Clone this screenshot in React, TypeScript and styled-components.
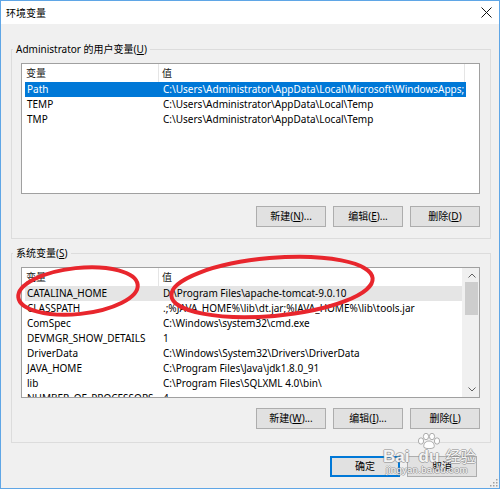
import React from "react";
import styled, { createGlobalStyle } from "styled-components";

const FONT = `"Noto Sans", "Noto Sans CJK SC", sans-serif`;

const Global = createGlobalStyle`
  html, body { margin: 0; padding: 0; background: #ffffff; }
  body { width: 500px; height: 489px; overflow: hidden; font-family: ${FONT}; font-size: 10px; color: #000; }
  * { box-sizing: border-box; }
`;

const Window = styled.div`
  position: relative;
  width: 500px;
  height: 489px;
  border: 1px solid #5fa6e6;
  background: #f0f0f0;
  display: flex;
  flex-direction: column;
`;

const TitleBar = styled.div`
  height: 23px;
  flex: none;
  background: #ffffff;
  display: flex;
  align-items: center;
  justify-content: space-between;
  padding: 0 7px 0 5px;
  font-size: 10px;
  line-height: 14px;
`;

const Body = styled.div`
  flex: 1;
  display: flex;
  flex-direction: column;
  padding: 17px 8px 0 10px;
`;

const Group = styled.fieldset<{ $pb: number; $mt: number }>`
  margin: ${(p) => p.$mt}px 0 0 0;
  padding: 6px 10px ${(p) => p.$pb}px 9px;
  border: 1px solid #dcdcdc;
  min-width: 0;
`;

const Legend = styled.legend`
  margin-left: -8px;
  padding: 0 3px;
  font-size: 10px;
  line-height: 16px;
  height: 16px;
`;

const List = styled.div`
  height: 131px;
  border: 1px solid #a0a0a0;
  background: #ffffff;
  display: flex;
  overflow: hidden;
`;

const ListContent = styled.div`
  flex: 1;
  min-width: 0;
  overflow: hidden;
`;

const Header = styled.div`
  height: 18px;
  display: flex;
  align-items: center;
  line-height: 18px;
  color: #1a1a1a;
`;

const HeaderCell = styled.div<{ $w?: number; $pl: number }>`
  flex: none;
  width: ${(p) => (p.$w ? `${p.$w}px` : "auto")};
  height: 18px;
  padding-left: ${(p) => p.$pl}px;
  border-right: 1px solid #e5e5e5;
  white-space: nowrap;
`;

const Row = styled.div<{ $state?: "selected" | "hover" }>`
  width: 441px;
  height: 15px;
  margin-left: 3px;
  display: flex;
  line-height: 15px;
  white-space: nowrap;
  background: ${(p) =>
    p.$state === "selected" ? "#0078d7" : p.$state === "hover" ? "#e5e5e5" : "transparent"};
  color: ${(p) => (p.$state === "selected" ? "#ffffff" : "#000000")};
`;

const NameCell = styled.div`
  flex: none;
  width: 136px;
  padding-left: 2px;
  overflow: hidden;
`;

const ValueCell = styled.div`
  flex: 1;
  padding-left: 2px;
  overflow: hidden;
`;

const ScrollBar = styled.div`
  flex: none;
  width: 17px;
  background: #f0f0f0;
  display: flex;
  flex-direction: column;
`;

const ArrowBox = styled.div<{ $h: number }>`
  height: ${(p) => p.$h}px;
  flex: none;
  display: flex;
  align-items: center;
  justify-content: center;
  padding-left: 2px;
`;

const Track = styled.div`
  flex: 1;
`;

const Thumb = styled.div`
  height: 33px;
  margin: 0 1px 0 3px;
  background: #cdcdcd;
`;

const ButtonRow = styled.div<{ $mt: number; $pr?: number }>`
  margin-top: ${(p) => p.$mt}px;
  padding-right: ${(p) => p.$pr ?? 0}px;
  display: flex;
  justify-content: flex-end;
  gap: 7px;
`;

const Button = styled.button<{ $default?: boolean }>`
  width: 70px;
  height: 21px;
  padding: 0;
  margin: 0;
  font-family: ${FONT};
  font-size: 10px;
  line-height: 19px;
  color: #000;
  background: #e1e1e1;
  border: 1px solid ${(p) => (p.$default ? "#0078d7" : "#adadad")};
  box-shadow: ${(p) => (p.$default ? "inset 0 0 0 1px #0078d7" : "none")};
`;

const Overlay = styled.svg`
  position: absolute;
  left: -1px;
  top: -1px;
  pointer-events: none;
`;

const Watermark = styled.div`
  position: absolute;
  left: 382px;
  top: 432px;
  display: flex;
  flex-direction: column;
  align-items: flex-start;
  color: rgba(255, 255, 255, 0.92);
  text-shadow: 1px 0 rgba(130, 130, 130, 0.55), -1px 0 rgba(130, 130, 130, 0.55),
    0 1px rgba(130, 130, 130, 0.55), 0 -1px rgba(130, 130, 130, 0.55);
  font-family: "Liberation Sans", "Noto Sans CJK SC", sans-serif;
  pointer-events: none;
`;

const WmTop = styled.div`
  display: flex;
  align-items: flex-end;
  height: 31px;
  font-size: 17px;
  font-weight: bold;
  line-height: 15px;
`;

const WmPaw = styled.div`
  width: 27px;
  display: flex;
  flex-direction: column;
  align-items: center;
  margin-left: 6px;
`;

const WmCn = styled.span`
  font-size: 15px;
  font-weight: normal;
  margin-left: 3px;
`;

const WmUrl = styled.div`
  font-size: 9.5px;
  line-height: 12px;
  letter-spacing: 0.3px;
  margin-left: 3px;
`;

const Grip = styled.svg`
  position: absolute;
  right: 1px;
  bottom: 1px;
`;

type Var = { name: string; value: string; state?: "selected" | "hover" };

const userVars: Var[] = [
  { name: "Path", value: "C:\\Users\\Administrator\\AppData\\Local\\Microsoft\\WindowsApps;", state: "selected" },
  { name: "TEMP", value: "C:\\Users\\Administrator\\AppData\\Local\\Temp" },
  { name: "TMP", value: "C:\\Users\\Administrator\\AppData\\Local\\Temp" },
];

const sysVars: Var[] = [
  { name: "CATALINA_HOME", value: "D:\\Program Files\\apache-tomcat-9.0.10", state: "hover" },
  { name: "CLASSPATH", value: ".;%JAVA_HOME%\\lib\\dt.jar;%JAVA_HOME%\\lib\\tools.jar" },
  { name: "ComSpec", value: "C:\\Windows\\system32\\cmd.exe" },
  { name: "DEVMGR_SHOW_DETAILS", value: "1" },
  { name: "DriverData", value: "C:\\Windows\\System32\\Drivers\\DriverData" },
  { name: "JAVA_HOME", value: "C:\\Program Files\\Java\\jdk1.8.0_91" },
  { name: "lib", value: "C:\\Program Files\\SQLXML 4.0\\bin\\" },
  { name: "NUMBER_OF_PROCESSORS", value: "4" },
];

const Chevron = ({ up }: { up?: boolean }) => (
  <svg width="8" height="5" viewBox="0 0 8 5">
    <polyline
      points={up ? "0.5,4.5 4,1 7.5,4.5" : "0.5,0.5 4,4 7.5,0.5"}
      fill="none"
      stroke="#606060"
      strokeWidth="1"
    />
  </svg>
);

const VarList = ({ vars, scroll }: { vars: Var[]; scroll?: boolean }) => (
  <List>
    <ListContent>
      <Header>
        <HeaderCell $w={137} $pl={4}>变量</HeaderCell>
        <HeaderCell $w={306} $pl={3}>值</HeaderCell>
      </Header>
      {vars.map((v) => (
        <Row key={v.name} $state={v.state}>
          <NameCell>{v.name}</NameCell>
          <ValueCell>{v.value}</ValueCell>
        </Row>
      ))}
    </ListContent>
    {scroll && (
      <ScrollBar>
        <ArrowBox $h={14}>
          <Chevron up />
        </ArrowBox>
        <Track>
          <Thumb />
        </Track>
        <ArrowBox $h={15}>
          <Chevron />
        </ArrowBox>
      </ScrollBar>
    )}
  </List>
);

export default function App() {
  return (
    <>
      <Global />
      <Window>
        <TitleBar>
          <span>环境变量</span>
          <svg width="11" height="11" viewBox="0 0 11 11">
            <path d="M0.5 0.5 L10.5 10.5 M10.5 0.5 L0.5 10.5" stroke="#111" strokeWidth="1" />
          </svg>
        </TitleBar>
        <Body>
          <Group $pb={11} $mt={0}>
            <Legend>Administrator 的用户变量(<u>U</u>)</Legend>
            <VarList vars={userVars} />
            <ButtonRow $mt={12}>
              <Button>新建(<u>N</u>)...</Button>
              <Button>编辑(<u>E</u>)...</Button>
              <Button>删除(<u>D</u>)</Button>
            </ButtonRow>
          </Group>
          <Group $pb={13} $mt={6}>
            <Legend>系统变量(<u>S</u>)</Legend>
            <VarList vars={sysVars} scroll />
            <ButtonRow $mt={10}>
              <Button>新建(<u>W</u>)...</Button>
              <Button>编辑(<u>I</u>)...</Button>
              <Button>删除(<u>L</u>)</Button>
            </ButtonRow>
          </Group>
          <ButtonRow $mt={13} $pr={14}>
            <Button $default>确定</Button>
            <Button>取消</Button>
          </ButtonRow>
        </Body>

        <Overlay width="500" height="489" viewBox="0 0 500 489">
          <ellipse
            cx="78"
            cy="291"
            rx="60"
            ry="23"
            transform="rotate(-6 78 291)"
            fill="none"
            stroke="#e8262d"
            strokeWidth="4"
          />
          <ellipse
            cx="272"
            cy="287"
            rx="101"
            ry="29"
            transform="rotate(-5 272 287)"
            fill="none"
            stroke="#e8262d"
            strokeWidth="4"
          />
        </Overlay>

        <Watermark>
          <WmTop>
            <span>Bai</span>
            <WmPaw>
              <svg width="24" height="16" viewBox="0 0 24 16">
                <g fill="rgba(255,255,255,0.9)" stroke="#999999" strokeWidth="0.8">
                  <ellipse cx="4" cy="8" rx="2.6" ry="3.2" />
                  <ellipse cx="9" cy="3.5" rx="2.6" ry="3.2" />
                  <ellipse cx="15" cy="3.5" rx="2.6" ry="3.2" />
                  <ellipse cx="20" cy="8" rx="2.6" ry="3.2" />
                  <path d="M12 8 C8 8 6 12 7 14.5 C9 16 15 16 17 14.5 C18 12 16 8 12 8 Z" />
                </g>
              </svg>
              <span>du</span>
            </WmPaw>
            <WmCn>经验</WmCn>
          </WmTop>
          <WmUrl>jingyan.baidu.com</WmUrl>
        </Watermark>

        <Grip width="8" height="8" viewBox="0 0 8 8">
          <g fill="#a0a0a0">
            <rect x="6" y="0" width="1.5" height="1.5" />
            <rect x="3" y="3" width="1.5" height="1.5" />
            <rect x="6" y="3" width="1.5" height="1.5" />
            <rect x="0" y="6" width="1.5" height="1.5" />
            <rect x="3" y="6" width="1.5" height="1.5" />
            <rect x="6" y="6" width="1.5" height="1.5" />
          </g>
        </Grip>
      </Window>
    </>
  );
}
